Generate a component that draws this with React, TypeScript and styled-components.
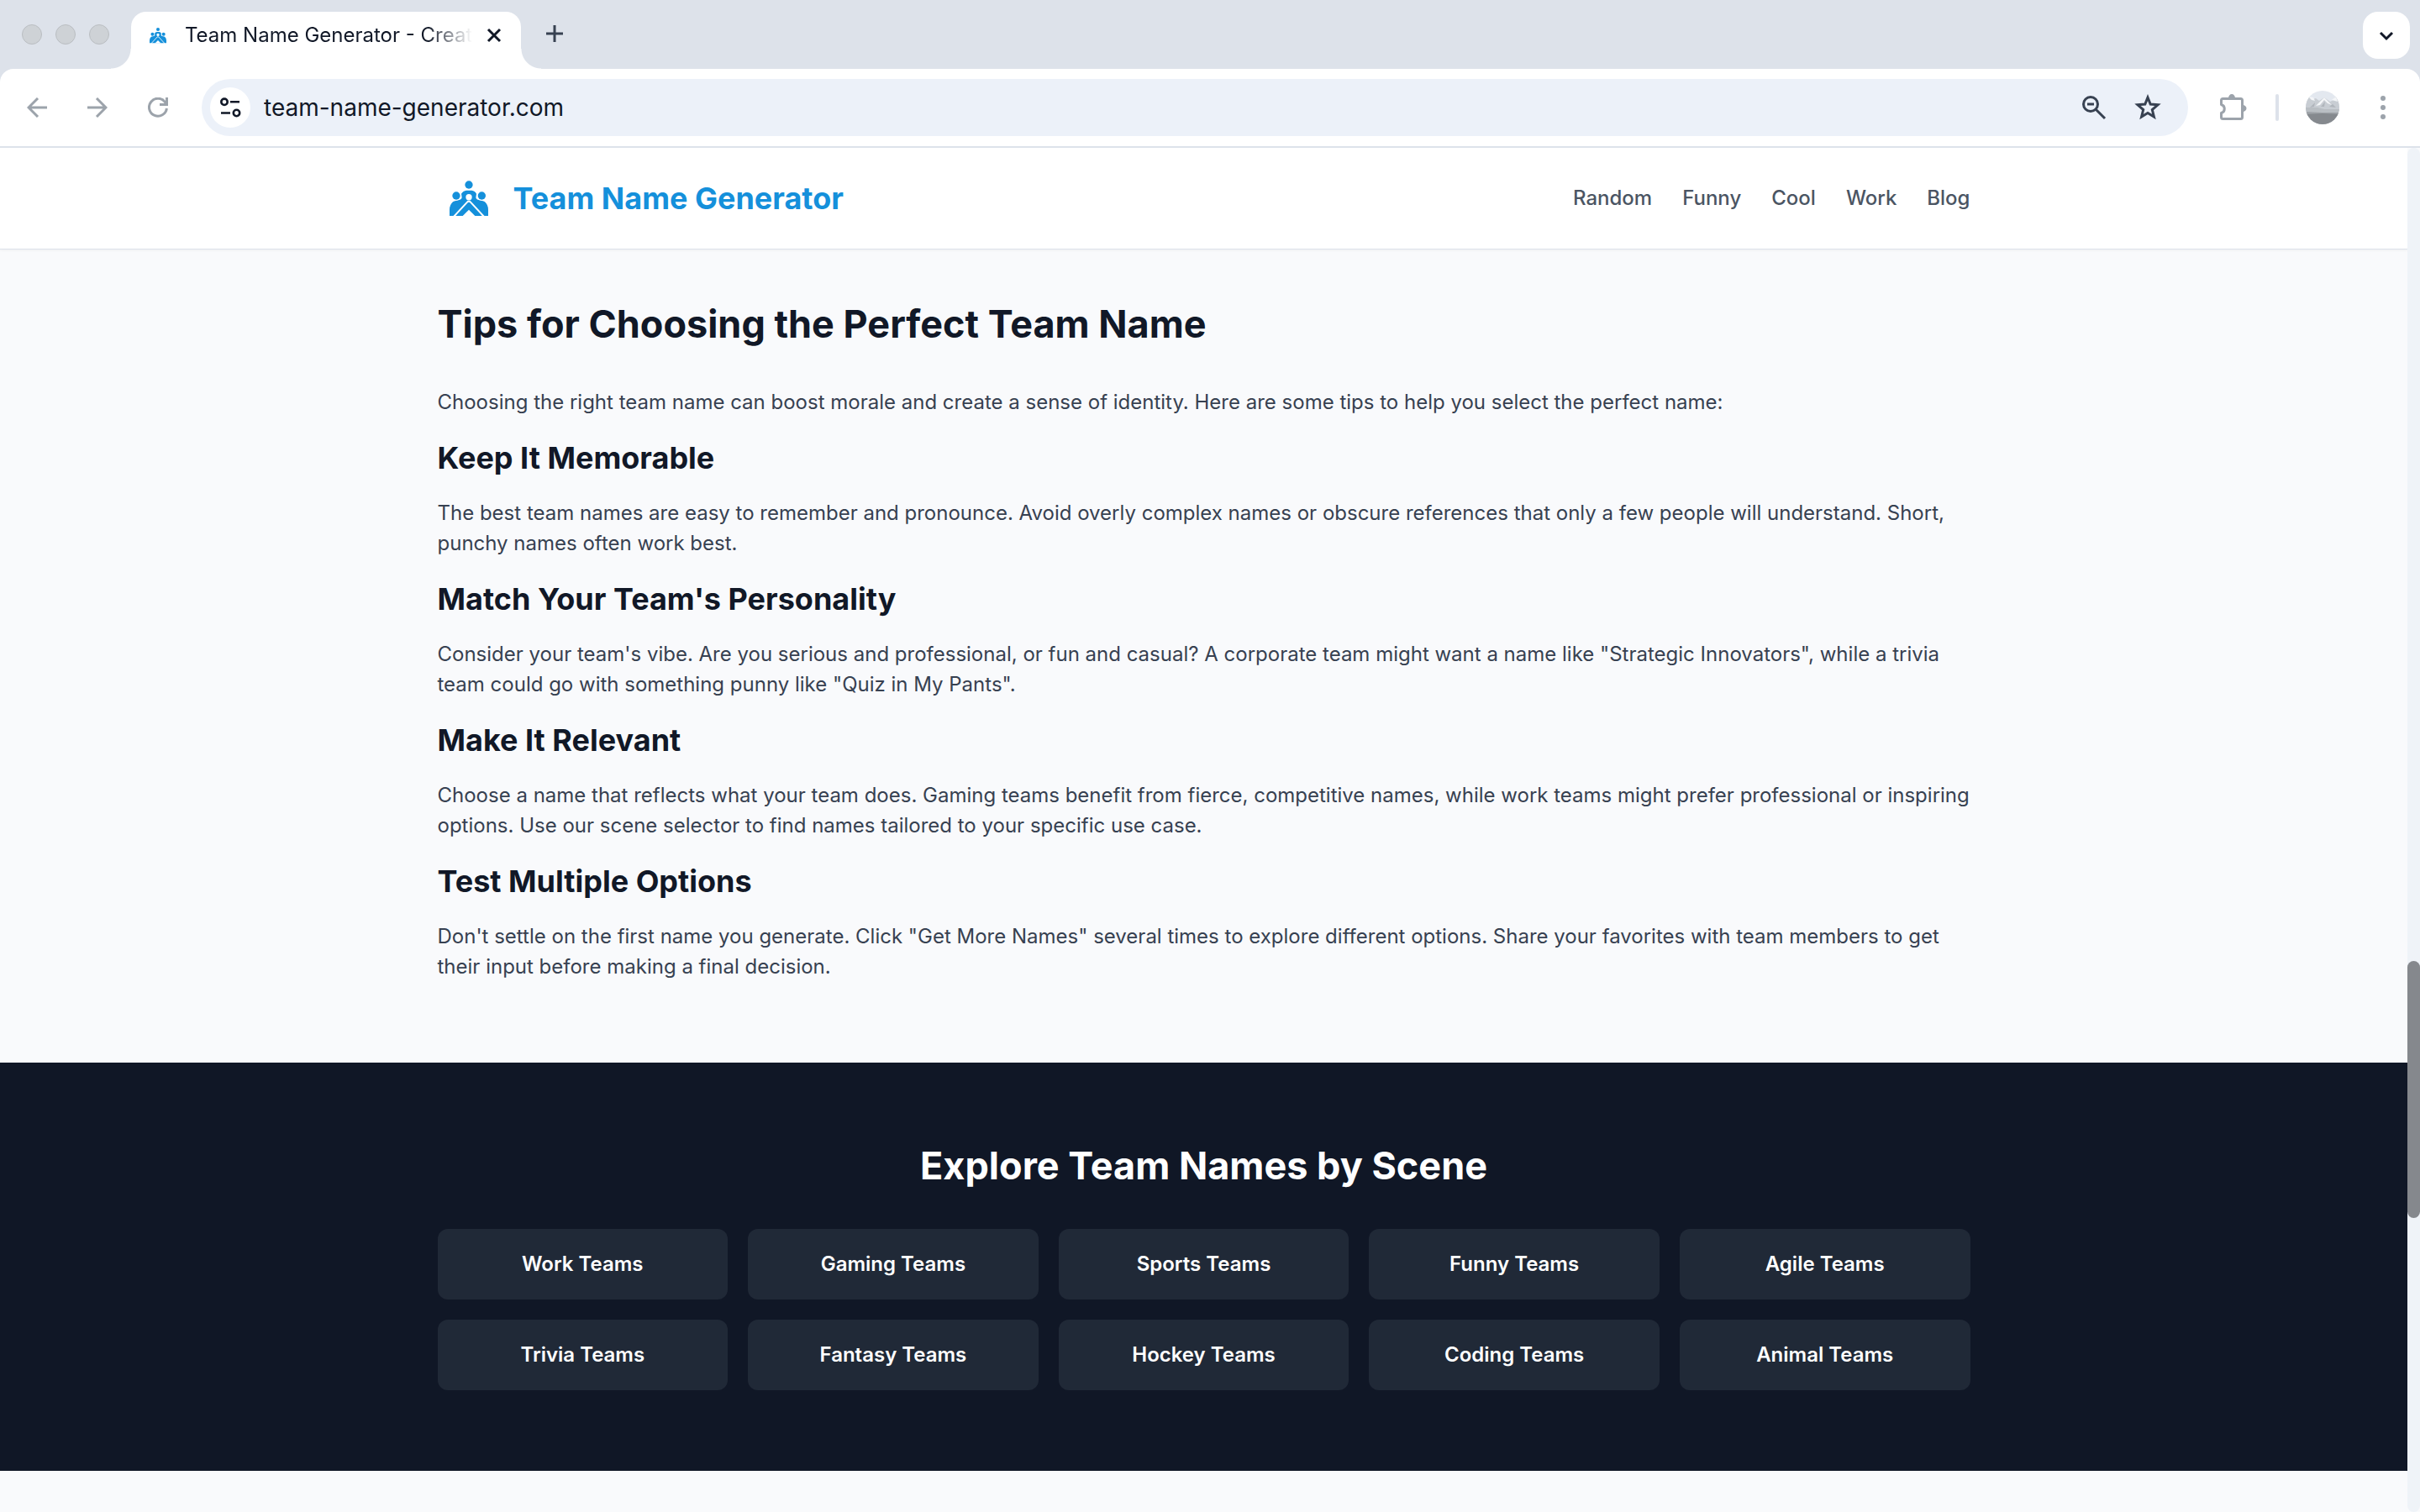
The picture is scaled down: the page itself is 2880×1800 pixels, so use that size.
import React from "react";
import styled, { createGlobalStyle, css } from "styled-components";

const GlobalStyle = createGlobalStyle`
  *, *::before, *::after { box-sizing: border-box; }
  html, body, #root { height: 100%; }
  body {
    margin: 0;
    overflow: hidden;
    font-family: Inter, "Liberation Sans", sans-serif;
    font-size: 24px;
    line-height: 36px;
    color: #374151;
    background: #f9fafc;
    -webkit-font-smoothing: antialiased;
  }
  h1, h2, h3, p, ul { margin: 0; padding: 0; }
  button, input { font: inherit; color: inherit; border: 0; padding: 0; background: none; }
  button { display: flex; align-items: center; justify-content: center; cursor: pointer; }
  a { color: inherit; text-decoration: none; }
  svg { display: block; flex: none; }
`;

/* ---------- Browser chrome ---------- */

const Window = styled.div`
  display: flex;
  flex-direction: column;
  height: 100vh;
  overflow: hidden;
  background: #dde2ea;
`;

const TabStrip = styled.div`
  display: flex;
  align-items: flex-start;
  height: 82px;
  flex: none;
  padding: 14px 12px 0 26px;
`;

const WindowControls = styled.div`
  display: flex;
  gap: 16px;
  padding-top: 15px;
  margin-right: 26px;
`;

const ControlDot = styled.button`
  width: 24px;
  height: 24px;
  border: 1px solid #babec2;
  border-radius: 50%;
  background: #ced2d6;
`;

const Tab = styled.div`
  position: relative;
  display: flex;
  align-items: center;
  width: 464px;
  height: 68px;
  padding: 0 22px 12px;
  border-radius: 18px 18px 0 0;
  background: #fff;
  color: #111827;

  &::before, &::after {
    content: "";
    position: absolute;
    bottom: 0;
    width: 24px;
    height: 24px;
  }
  &::before {
    right: 100%;
    background: radial-gradient(circle at 0 0, transparent 23px, #fff 24px);
  }
  &::after {
    left: 100%;
    background: radial-gradient(circle at 100% 0, transparent 23px, #fff 24px);
  }
`;

const TabTitle = styled.span`
  flex: 1;
  min-width: 0;
  margin: 0 16px 0 22px;
  white-space: nowrap;
  mask-image: linear-gradient(to right, #000 84%, transparent 100%);
`;

const NewTab = styled.button`
  width: 40px;
  height: 52px;
  margin-left: 20px;
  color: #374151;
`;

const TabSearch = styled.button`
  width: 56px;
  height: 56px;
  margin-left: auto;
  border-radius: 18px;
  background: #fff;
  color: #111827;
`;

const Toolbar = styled.div`
  display: flex;
  align-items: center;
  height: 94px;
  flex: none;
  padding: 0 24px 0 8px;
  border-bottom: 2px solid #dde2ea;
  border-radius: 16px 16px 0 0;
  background: #fff;
`;

const NavButton = styled.button`
  width: 72px;
  height: 68px;
  color: #9ca3ab;
`;

const Omnibox = styled.form`
  display: flex;
  align-items: center;
  flex: 1;
  height: 68px;
  margin: 0 36px 0 16px;
  padding: 0 32px 0 10px;
  gap: 32px;
  border-radius: 34px;
  background: #ecf1f9;
  color: #374151;
`;

const SiteInfo = styled.button`
  width: 48px;
  height: 48px;
  margin-right: -16px;
  border-radius: 50%;
  background: #fff;
  color: #111827;
`;

const Address = styled.input`
  flex: 1;
  min-width: 0;
  height: 48px;
  font-size: 28px;
  color: #111827;
  outline: none;
`;

const ToolbarEnd = styled.div`
  display: flex;
  align-items: center;
  gap: 32px;
  color: #9ca3ab;
`;

const Divider = styled.span`
  width: 4px;
  height: 32px;
  border-radius: 2px;
  background: #dde2ea;
`;

/* ---------- Page ---------- */

const Viewport = styled.div`
  display: flex;
  flex: 1;
  min-height: 0;
  background: #f9fafc;
`;

const Page = styled.div`
  flex: 1;
  min-width: 0;
  overflow: hidden;
`;

const ScrollTrack = styled.div`
  display: grid;
  grid-template-rows: 968fr 306fr 350fr;
  width: 15px;
  flex: none;
  border-radius: 8px;
  background: #eff3f8;
`;

const ScrollThumb = styled.div`
  grid-row: 2;
  border-radius: 8px;
  background: #85888d;
`;

const container = css`
  width: 100%;
  max-width: 1920px;
  margin: 0 auto;
  padding-left: 48px;
  padding-right: 48px;
`;

const SiteHeader = styled.header`
  border-bottom: 1px solid #dde2ea;
  background: #fff;
  box-shadow: 0 1px 3px rgba(0, 0, 0, 0.05);
`;

const HeaderInner = styled.div`
  ${container}
  display: flex;
  align-items: center;
  justify-content: space-between;
  padding-top: 24px;
  padding-bottom: 24px;
`;

const Brand = styled.a`
  display: flex;
  align-items: center;
  gap: 18px;
  font-size: 36px;
  line-height: 48px;
  font-weight: 700;
  color: #1590db;
`;

const SiteNav = styled.nav`
  display: flex;
  gap: 36px;
  font-weight: 500;
  color: #4b5563;
`;

const Tips = styled.section`
  ${container}
  padding-top: 62px;
  padding-bottom: 96px;
`;

const SectionTitle = styled.h2<{ $inverse?: boolean }>`
  margin-bottom: 48px;
  font-size: 45px;
  line-height: 54px;
  font-weight: 700;
  color: ${(p) => (p.$inverse ? "#fff" : "#111827")};
  text-align: ${(p) => (p.$inverse ? "center" : "left")};
`;

const TipTitle = styled.h3`
  margin: 24px 0;
  font-size: 36px;
  line-height: 48px;
  font-weight: 700;
  color: #111827;
`;

const Scenes = styled.section`
  background: #101726;
`;

const ScenesInner = styled.div`
  ${container}
  padding-top: 96px;
  padding-bottom: 96px;
`;

const SceneGrid = styled.div`
  display: grid;
  grid-template-columns: repeat(5, 1fr);
  gap: 24px;
`;

const SceneCard = styled.a`
  padding: 24px;
  border-radius: 12px;
  background: #202937;
  color: #fff;
  font-weight: 600;
  text-align: center;
`;

/* ---------- Drawings ---------- */

function LogoMark({ size, viewBox }: { size: number; viewBox: string }) {
  return (
    <svg width={size} height={size} viewBox={viewBox} aria-hidden="true">
      <g fill="#1590db">
        <circle cx="111" cy="60" r="14" />
        <circle cx="66" cy="99" r="14" />
        <circle cx="157" cy="99" r="14" />
        <path d="M42 171V149Q42 132 54 121Q60 116 70 116Q84 114 86 106L84 92Q90 81 102 80H121Q133 81 138 92L136 106Q138 114 152 116Q163 116 168 121Q180 132 180 149V171Z" />
      </g>
      <circle cx="111" cy="104" r="11" fill="#fff" />
      <path d="M54 177L105 122Q111 116 117 122L168 177" fill="none" stroke="#fff" strokeWidth="6" />
      <path d="M111 149L135 173H87Z" fill="#fff" />
    </svg>
  );
}

type IconProps = { size: number; width: number; children: React.ReactNode };

function Icon({ size, width, children }: IconProps) {
  return (
    <svg
      width={size}
      height={size}
      viewBox={`0 0 ${size} ${size}`}
      fill="none"
      stroke="currentColor"
      strokeWidth={width}
      aria-hidden="true"
    >
      {children}
    </svg>
  );
}

function Avatar() {
  return (
    <svg width="40" height="40" viewBox="0 0 40 40" role="img" aria-label="Profile">
      <clipPath id="avatar-clip">
        <circle cx="20" cy="20" r="20" />
      </clipPath>
      <g clipPath="url(#avatar-clip)">
        <rect width="40" height="40" fill="#e3e8ef" />
        <path d="M0 13L4 7L9 10L12 9L16 12L22 8L29 13L33 11L36 6L40 12V24H0Z" fill="#c8cdd3" />
        <path d="M12 18L22 8L31 17L26 15L22 11L17 17Z" fill="#f4f6f8" />
        <path d="M3 7L9 8L11 12L7 11Z M31 11L36 7L38 13Z" fill="#f4f6f8" />
        <path d="M5 20L11 14L10 19Z M18 19L23 13L22 19Z M28 19L32 16L36 20Z" fill="#b0b5bb" />
        <path d="M0 20H14L22 22H40V28H0Z" fill="#b9bec3" />
        <path d="M0 25L20 26H40V30H0Z" fill="#9ca1a6" />
        <path d="M0 28L20 27L40 28V40H0Z" fill="#85898e" />
      </g>
    </svg>
  );
}

/* ---------- Content ---------- */

const navLinks = ["Random", "Funny", "Cool", "Work", "Blog"];

const tips = [
  {
    title: "Keep It Memorable",
    body: "The best team names are easy to remember and pronounce. Avoid overly complex names or obscure references that only a few people will understand. Short, punchy names often work best.",
  },
  {
    title: "Match Your Team's Personality",
    body: 'Consider your team\'s vibe. Are you serious and professional, or fun and casual? A corporate team might want a name like "Strategic Innovators", while a trivia team could go with something punny like "Quiz in My Pants".',
  },
  {
    title: "Make It Relevant",
    body: "Choose a name that reflects what your team does. Gaming teams benefit from fierce, competitive names, while work teams might prefer professional or inspiring options. Use our scene selector to find names tailored to your specific use case.",
  },
  {
    title: "Test Multiple Options",
    body: 'Don\'t settle on the first name you generate. Click "Get More Names" several times to explore different options. Share your favorites with team members to get their input before making a final decision.',
  },
];

const scenes = ["Work", "Gaming", "Sports", "Funny", "Agile", "Trivia", "Fantasy", "Hockey", "Coding", "Animal"];

export default function App() {
  return (
    <>
      <GlobalStyle />
      <Window>
        <TabStrip>
          <WindowControls>
            <ControlDot aria-label="Close window" />
            <ControlDot aria-label="Minimize window" />
            <ControlDot aria-label="Zoom window" />
          </WindowControls>
          <Tab>
            <LogoMark size={20} viewBox="42 42 138 132" />
            <TabTitle>Team Name Generator - Creat</TabTitle>
            <button aria-label="Close tab">
              <Icon size={20} width={3}>
                <path d="M3 3L17 17M17 3L3 17" />
              </Icon>
            </button>
          </Tab>
          <NewTab aria-label="New tab">
            <Icon size={20} width={3}>
              <path d="M10 0V20M0 10H20" />
            </Icon>
          </NewTab>
          <TabSearch aria-label="Search tabs">
            <Icon size={20} width={3}>
              <path d="M3 7L10 14L17 7" />
            </Icon>
          </TabSearch>
        </TabStrip>

        <Toolbar>
          <NavButton aria-label="Back">
            <Icon size={24} width={3}>
              <path d="M24 12H2M13 1L2 12L13 23" />
            </Icon>
          </NavButton>
          <NavButton aria-label="Forward">
            <Icon size={24} width={3}>
              <path d="M0 12H22M11 1L22 12L11 23" />
            </Icon>
          </NavButton>
          <NavButton aria-label="Reload">
            <Icon size={24} width={3}>
              <path d="M22.4 13A10.5 10.5 0 1 1 20.5 5.6L22 8M22.5 0V8.5H14" />
            </Icon>
          </NavButton>
          <Omnibox onSubmit={(e) => e.preventDefault()}>
            <SiteInfo type="button" aria-label="View site information">
              <Icon size={26} width={2.6}>
                <circle cx="6" cy="6.3" r="3.7" />
                <circle cx="20.5" cy="19.5" r="3.7" />
                <path d="M13 6.3H24M2 19.5H13" />
              </Icon>
            </SiteInfo>
            <Address type="text" aria-label="Address" defaultValue="team-name-generator.com" />
            <button type="button" aria-label="Zoom">
              <Icon size={32} width={3}>
                <circle cx="12" cy="12" r="8.5" />
                <path d="M8 12H16M18 18L29 29" />
              </Icon>
            </button>
            <button type="button" aria-label="Bookmark this page">
              <Icon size={32} width={3}>
                <path d="M16 4L19.2 12.1L28 12.8L21.3 18.5L23.4 27L16 22.4L8.6 27L10.7 18.5L4 12.8L12.8 12.1Z" />
              </Icon>
            </button>
          </Omnibox>
          <ToolbarEnd>
            <button aria-label="Extensions">
              <Icon size={36} width={3}>
                <path
                  d="M5.5 7.500H26.500Q28.500 7.500 28.500 9.500V29.500Q28.500 31.500 26.500 31.500H5.500Q3.500 31.500 3.500 29.500V24.500A5.200 5.200 0 0 0 3.500 14.500V9.500Q3.500 7.500 5.500 7.500Z"
                  strokeLinejoin="round"
                />
                <path d="M12 7A4 5 0 0 1 20 7ZM29 15A4.500 4 0 0 1 29 23Z" fill="currentColor" stroke="none" />
              </Icon>
            </button>
            <Divider />
            <button aria-label="Account">
              <Avatar />
            </button>
            <button aria-label="Browser menu">
              <svg width="40" height="40" viewBox="0 0 40 40" fill="currentColor" aria-hidden="true">
                <circle cx="20" cy="9" r="3" />
                <circle cx="20" cy="20" r="3" />
                <circle cx="20" cy="31" r="3" />
              </svg>
            </button>
          </ToolbarEnd>
        </Toolbar>

        <Viewport>
          <Page>
            <SiteHeader>
              <HeaderInner>
                <Brand href="#home">
                  <LogoMark size={72} viewBox="0 0 216 216" />
                  Team Name Generator
                </Brand>
                <SiteNav>
                  {navLinks.map((label) => (
                    <a key={label} href={`#${label.toLowerCase()}`}>
                      {label}
                    </a>
                  ))}
                </SiteNav>
              </HeaderInner>
            </SiteHeader>
            <main>
              <Tips>
                <SectionTitle>Tips for Choosing the Perfect Team Name</SectionTitle>
                <p>
                  Choosing the right team name can boost morale and create a sense of identity. Here are some tips to
                  help you select the perfect name:
                </p>
                {tips.map((tip) => (
                  <React.Fragment key={tip.title}>
                    <TipTitle>{tip.title}</TipTitle>
                    <p>{tip.body}</p>
                  </React.Fragment>
                ))}
              </Tips>
              <Scenes>
                <ScenesInner>
                  <SectionTitle $inverse>Explore Team Names by Scene</SectionTitle>
                  <SceneGrid>
                    {scenes.map((scene) => (
                      <SceneCard key={scene} href={`#${scene.toLowerCase()}-teams`}>
                        {scene} Teams
                      </SceneCard>
                    ))}
                  </SceneGrid>
                </ScenesInner>
              </Scenes>
            </main>
          </Page>
          <ScrollTrack>
            <ScrollThumb />
          </ScrollTrack>
        </Viewport>
      </Window>
    </>
  );
}
